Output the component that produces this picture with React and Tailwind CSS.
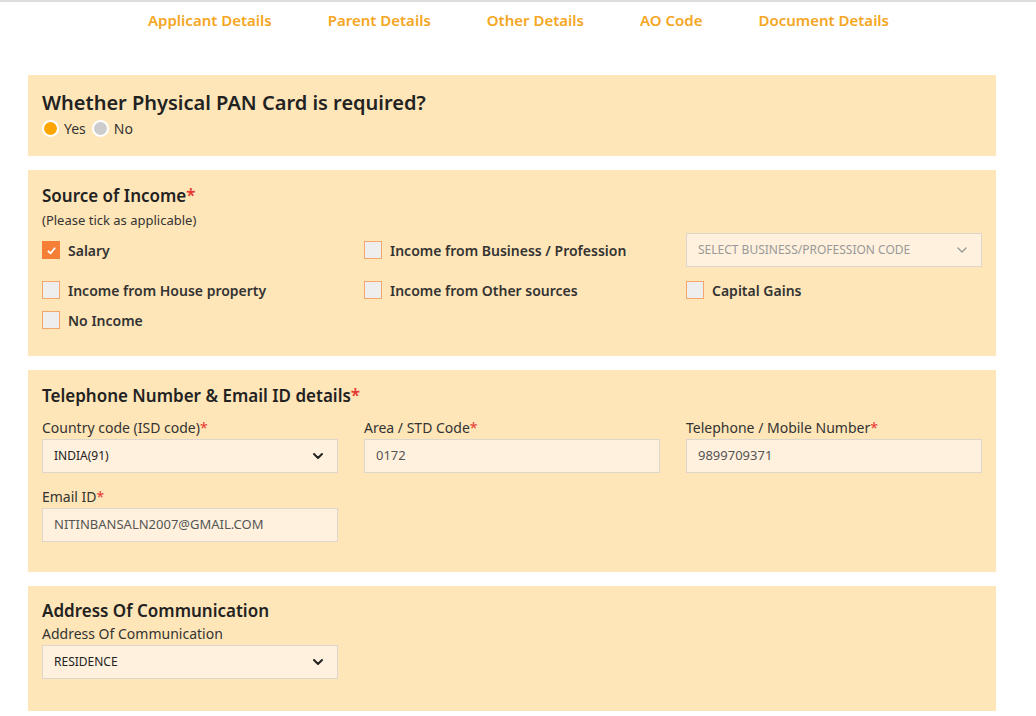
import { ChevronDown } from 'lucide-react';

const font = { fontFamily: '"Noto Sans", "Open Sans", sans-serif' };

const Check = ({ checked }) => (
  <span className={`w-[18px] h-[18px] border flex items-center justify-center shrink-0 ${checked ? 'bg-[#f57f36] border-[#f57f36]' : 'bg-[#eeeeee] border-[#f5a66e]'}`}>
    {checked && (
      <svg viewBox="0 0 12 12" className="w-[11px] h-[11px]"><path d="M2 6.5 L5 9 L10 3" stroke="white" strokeWidth="2" fill="none" /></svg>
    )}
  </span>
);

const CheckItem = ({ label, checked }) => (
  <div className="flex items-center gap-[8px] h-[34px]">
    <Check checked={checked} />
    <span className="text-[14px] font-semibold text-[#333]">{label}</span>
  </div>
);

const Label = ({ children, req }) => (
  <div className="text-[14px] text-[#333] mb-[1px] leading-[20px]">
    {children}{req && <span className="text-[#e53935]">*</span>}
  </div>
);

const Input = ({ value }) => (
  <div className="h-[34px] bg-[#fff1dd] border border-[#dcd6cc] flex items-center px-[11px] text-[13px] text-[#555]">{value}</div>
);

const Select = ({ value, light }) => (
  <div className={`h-[34px] bg-[#fff1dd] border border-[#dcd6cc] flex items-center justify-between px-[11px] ${light ? 'text-[12px] text-[#999]' : 'text-[12px] text-[#222]'}`}>
    <span>{value}</span>
    <ChevronDown className={light ? 'w-4 h-4 text-[#999]' : 'w-4 h-4 text-[#222]'} strokeWidth={light ? 2 : 3} />
  </div>
);

export default function App() {
  return (
    <div className="min-h-screen bg-white border-t-2 border-[#ddd] text-[#222]" style={font}>
      <nav className="flex h-[36px] items-center text-[15px] font-semibold text-[#f5a623] pl-[148px]">
        <span className="mr-[56px]">Applicant Details</span>
        <span className="mr-[56px]">Parent Details</span>
        <span className="mr-[56px]">Other Details</span>
        <span className="mr-[56px]">AO Code</span>
        <span>Document Details</span>
      </nav>

      <div className="ml-[28px] w-[968px] mt-[37px] flex flex-col gap-[14px]">
        <section className="bg-[#ffe6b8] h-[81px] px-[14px] pt-[14px]">
          <h2 className="text-[20px] font-semibold leading-[28px] text-[#222]">Whether Physical PAN Card is required?</h2>
          <div className="flex items-center gap-[5px] text-[14px] text-[#333] mt-[1px]">
            <span className="w-[17px] h-[17px] rounded-full bg-[#ffa500] border-2 border-white"></span>
            <span>Yes</span>
            <span className="w-[17px] h-[17px] rounded-full bg-[#cccccc] border-2 border-white ml-[1px]"></span>
            <span>No</span>
          </div>
        </section>

        <section className="bg-[#ffe6b8] h-[186px] px-[14px] pt-[13px]">
          <h2 className="text-[17px] font-semibold leading-[26px]">Source of Income<span className="text-[#e53935]">*</span></h2>
          <div className="text-[13px] text-[#333] mt-[1px] leading-[20px]">(Please tick as applicable)</div>
          <div className="grid grid-cols-3 gap-x-[26px] w-[940px] mt-[3px]">
            <CheckItem label="Salary" checked />
            <CheckItem label="Income from Business / Profession" />
            <Select value="SELECT BUSINESS/PROFESSION CODE" light />
          </div>
          <div className="grid grid-cols-3 gap-x-[26px] w-[940px] mt-[6px]">
            <CheckItem label="Income from House property" />
            <CheckItem label="Income from Other sources" />
            <CheckItem label="Capital Gains" />
            <div className="-mt-[4px]"><CheckItem label="No Income" /></div>
          </div>
        </section>

        <section className="bg-[#ffe6b8] h-[202px] px-[14px] pt-[13px]">
          <h2 className="text-[17px] font-semibold leading-[26px]">Telephone Number &amp; Email ID details<span className="text-[#e53935]">*</span></h2>
          <div className="grid grid-cols-3 gap-x-[26px] w-[940px] mt-[9px]">
            <div><Label req>Country code (ISD code)</Label><Select value="INDIA(91)" /></div>
            <div><Label req>Area / STD Code</Label><Input value="0172" /></div>
            <div><Label req>Telephone / Mobile Number</Label><Input value="9899709371" /></div>
            <div className="mt-[14px]"><Label req>Email ID</Label><Input value="NITINBANSALN2007@GMAIL.COM" /></div>
          </div>
        </section>

        <section className="bg-[#ffe6b8] h-[125px] px-[14px] pt-[12px]">
          <h2 className="text-[17px] font-semibold leading-[26px]">Address Of Communication</h2>
          <div className="w-[296px]">
            <Label>Address Of Communication</Label>
            <Select value="RESIDENCE" />
          </div>
        </section>
      </div>
    </div>
  );
}
